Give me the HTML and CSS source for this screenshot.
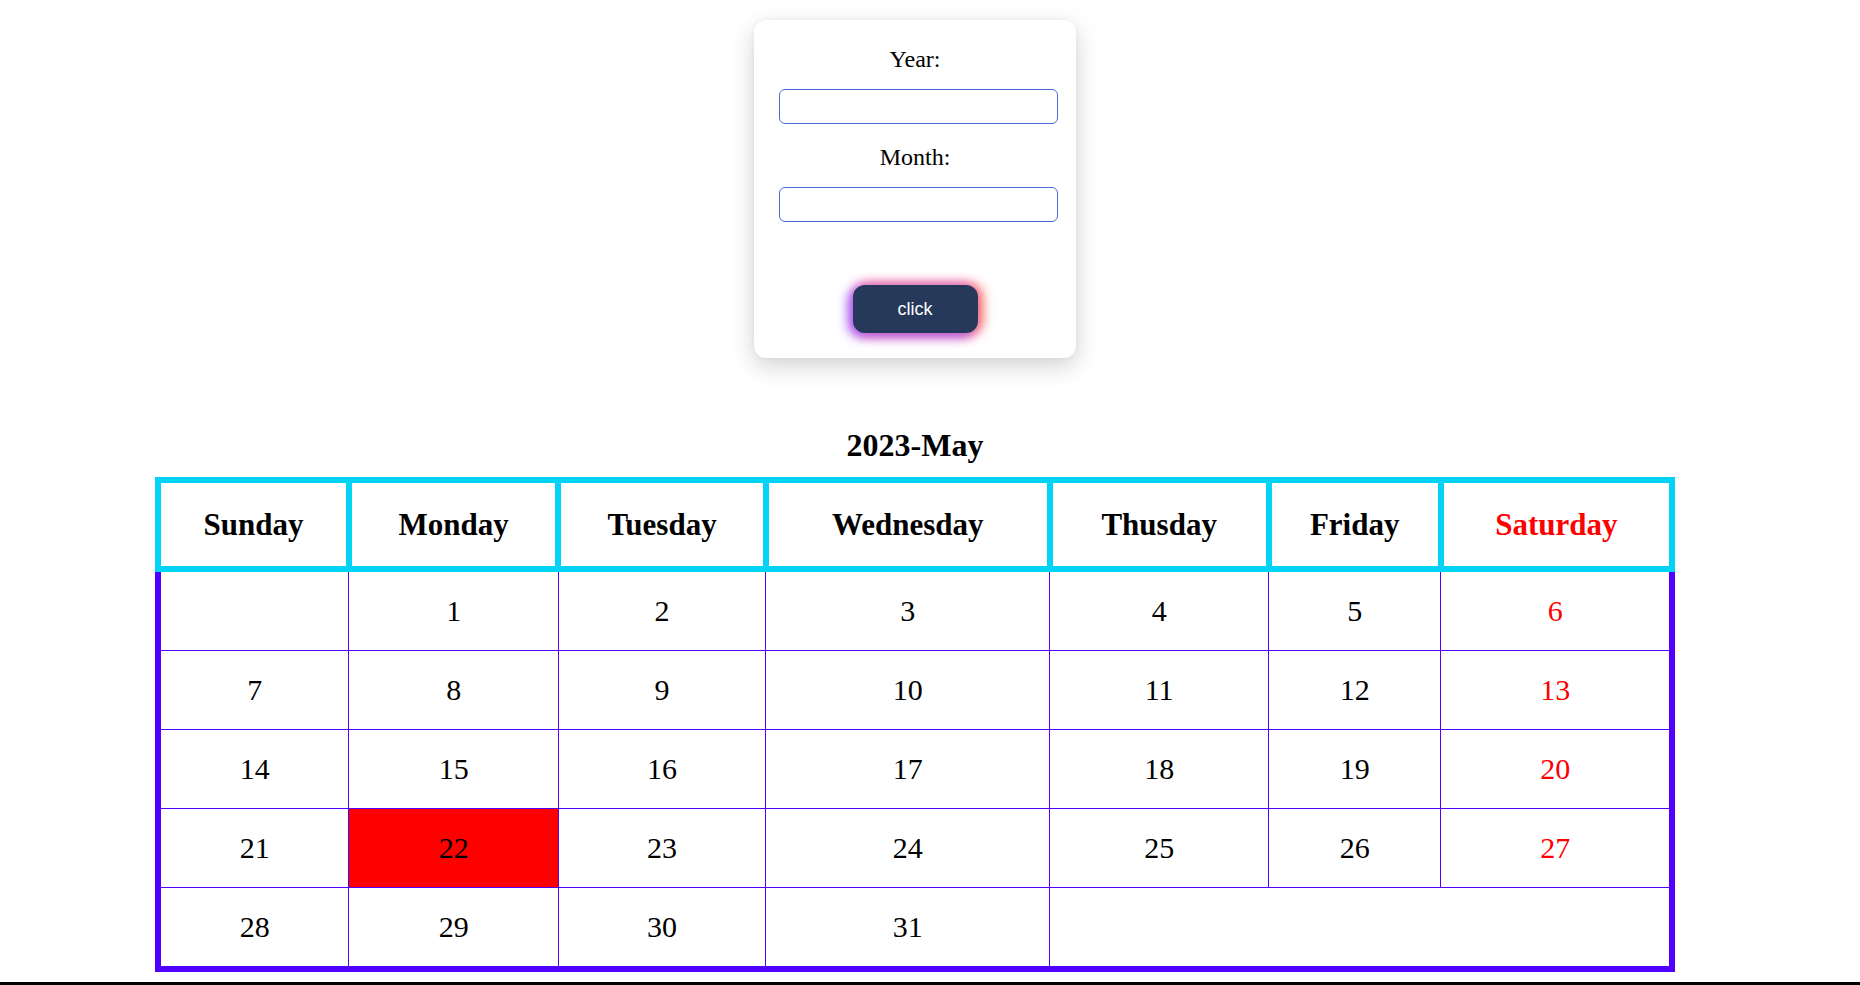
FILE: index.html
```html
<!DOCTYPE html>
<html lang="en">
<head>
<meta charset="utf-8">
<title>Calendar</title>
<link rel="stylesheet" href="styles.css">
</head>
<body>
<div class="page">
  <form class="card">
    <label class="field-label" for="year">Year:</label>
    <input class="field-input" id="year" type="text">
    <label class="field-label" for="month">Month:</label>
    <input class="field-input" id="month" type="text">
    <button class="btn" type="button">click</button>
  </form>

  <h1 class="cal-title">2023-May</h1>

  <table class="cal">
    <thead>
      <tr>
        <th>Sunday</th>
        <th>Monday</th>
        <th>Tuesday</th>
        <th>Wednesday</th>
        <th>Thusday</th>
        <th>Friday</th>
        <th class="sat">Saturday</th>
      </tr>
    </thead>
    <tbody>
      <tr>
        <td></td><td>1</td><td>2</td><td>3</td><td>4</td><td>5</td><td class="sat">6</td>
      </tr>
      <tr>
        <td>7</td><td>8</td><td>9</td><td>10</td><td>11</td><td>12</td><td class="sat">13</td>
      </tr>
      <tr>
        <td>14</td><td>15</td><td>16</td><td>17</td><td>18</td><td>19</td><td class="sat">20</td>
      </tr>
      <tr>
        <td>21</td><td class="today">22</td><td>23</td><td>24</td><td>25</td><td>26</td><td class="sat">27</td>
      </tr>
      <tr>
        <td>28</td><td>29</td><td>30</td><td>31</td><td colspan="3"></td>
      </tr>
    </tbody>
  </table>
</div>
<div class="bottom-line"></div>
</body>
</html>
```
FILE: styles.css
```css
html, body {
  margin: 0;
  padding: 0;
  background: #ffffff;
}

body {
  font-family: "Liberation Serif", "Times New Roman", serif;
  color: #000;
}

.page {
  width: 1830px;
  display: flex;
  flex-direction: column;
  align-items: center;
  padding-top: 20px;
}

.card {
  box-sizing: border-box;
  width: 322px;
  height: 338px;
  padding: 25px 25px;
  background: #fff;
  border-radius: 12px;
  box-shadow: 0 8px 24px rgba(0, 0, 0, 0.18), 0 0 6px rgba(0, 0, 0, 0.04);
  display: flex;
  flex-direction: column;
  align-items: center;
}

.field-label {
  font-size: 24px;
  line-height: 28px;
  height: 28px;
  margin-bottom: 16px;
}

.field-input {
  box-sizing: border-box;
  width: 279px;
  height: 35px;
  margin: 0 0 19px 6px;
  border: 1px solid #4a6bd9;
  border-radius: 6px;
  background: #fff;
  padding: 0 8px;
  font: 16px "Liberation Sans", Arial, sans-serif;
  outline: none;
}

.field-input + .field-label + .field-input {
  margin-bottom: 0;
}

.btn {
  margin-top: 63px;
  width: 125px;
  height: 48px;
  border: none;
  border-radius: 12px;
  background: #27395b;
  color: #fff;
  font: 18px "Liberation Sans", Arial, sans-serif;
  cursor: pointer;
  box-shadow:
    -5px 3px 12px rgba(150, 80, 255, 0.85),
    5px 0 12px rgba(255, 110, 80, 0.85),
    0 -4px 10px rgba(240, 90, 200, 0.55),
    0 5px 10px rgba(240, 80, 190, 0.55);
}

.cal-title {
  margin: 69px 0 0 0;
  font-size: 32px;
  line-height: 37px;
  font-weight: bold;
}

.cal {
  margin-top: 13px;
  width: 1520px;
  border-collapse: collapse;
  border: 6px solid #5000ff;
}

.cal th {
  border: 6px solid #00d3f6;
  height: 83px;
  padding: 0;
  font-size: 31px;
  font-weight: bold;
  text-align: center;
}

.cal td {
  border: 1px solid #5000ff;
  height: 78px;
  padding: 0;
  font-size: 30px;
  text-align: center;
}

.cal .sat {
  color: #ff0000;
}

.cal td.today {
  background: #ff0000;
  color: #000;
}

.bottom-line {
  margin-top: 10px;
  border-top: 3px solid #000;
  height: 20px;
}
```
